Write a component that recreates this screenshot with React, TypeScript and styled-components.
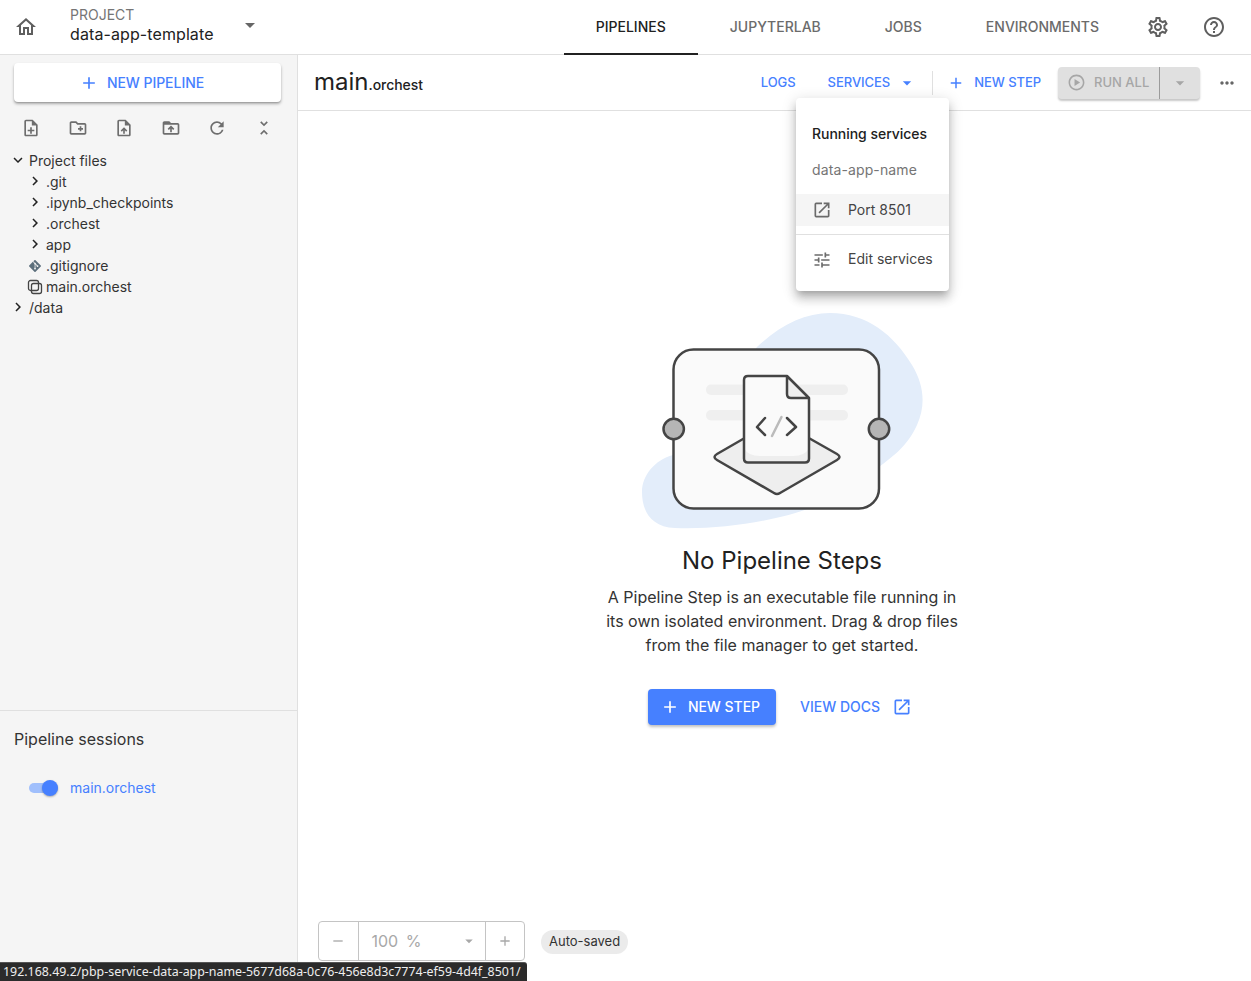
import React from "react";
import styled, { createGlobalStyle } from "styled-components";
import {
  MdAdd,
  MdArrowDropDown,
  MdChevronRight,
  MdDriveFolderUpload,
  MdExpandMore,
  MdHelpOutline,
  MdMoreHoriz,
  MdOpenInNew,
  MdOutlineCreateNewFolder,
  MdOutlineHome,
  MdOutlineNoteAdd,
  MdOutlinePlayCircle,
  MdOutlineSettings,
  MdOutlineTune,
  MdOutlineUploadFile,
  MdRefresh,
  MdRemove,
  MdUnfoldLess,
} from "react-icons/md";
import { SiGit } from "react-icons/si";

const BLUE = "#4680ff";

const GlobalStyle = createGlobalStyle`
  html, body {
    margin: 0;
    height: 100%;
    overflow: hidden;
    background: #fff;
  }
  body {
    font-family: Inter, "Liberation Sans", sans-serif;
    color: #212121;
  }
`;

// #region Header

const Page = styled.div`
  position: relative;
  display: flex;
  flex-direction: column;
  height: 981px;
  overflow: hidden;
`;

const Header = styled.header`
  display: flex;
  align-items: stretch;
  flex: 0 0 55px;
  box-sizing: border-box;
  border-bottom: 1px solid #e0e0e0;
  padding-right: 9px;
`;

const HomeButton = styled.div`
  display: flex;
  align-items: center;
  justify-content: center;
  width: 52px;
  font-size: 24px;
  color: #5f5f5f;
`;

const ProjectSelect = styled.div`
  display: flex;
  align-items: center;
  justify-content: space-between;
  width: 194px;
  margin-left: 18px;
  padding: 0 2px 4px 0;
  box-sizing: border-box;
`;

const ProjectLabel = styled.div`
  font-size: 14px;
  line-height: 18px;
  color: #757575;
`;

const ProjectName = styled.div`
  font-size: 16px;
  line-height: 20px;
  letter-spacing: 0.1px;
  color: #212121;
`;

const CaretIcon = styled(MdArrowDropDown)`
  font-size: 24px;
  color: #666;
`;

const Tabs = styled.nav`
  display: flex;
  margin-left: auto;
  margin-right: -1px;
  align-items: stretch;
`;

const Tab = styled.div<{ $active?: boolean }>`
  display: flex;
  align-items: center;
  padding: 0 32px 2px;
  font-size: 14px;
  font-weight: 500;
  color: ${(p) => (p.$active ? "#212121" : "#6b6b6b")};
  box-shadow: ${(p) => (p.$active ? "inset 0 -2px 0 #212121" : "none")};
  margin-bottom: -1px;
`;

const HeaderIcon = styled.div`
  display: flex;
  align-items: center;
  justify-content: center;
  width: 56px;
  font-size: 24px;
  color: #5f5f5f;
`;

// #endregion

// #region Sidebar

const Body = styled.div`
  display: flex;
  flex: 1;
  min-height: 0;
`;

const Sidebar = styled.aside`
  display: flex;
  flex-direction: column;
  flex: 0 0 298px;
  box-sizing: border-box;
  background: #f5f5f5;
  border-right: 1px solid #e0e0e0;
`;

const NewPipeline = styled.div`
  display: flex;
  align-items: center;
  justify-content: center;
  gap: 8px;
  height: 39px;
  margin: 8px 16px 0 14px;
  padding-right: 12px;
  background: #fff;
  border-radius: 4px;
  color: ${BLUE};
  font-size: 14px;
  font-weight: 500;
  letter-spacing: -0.05px;
  box-shadow: 0 2px 3px rgba(0, 0, 0, 0.3), 0 1px 1px rgba(0, 0, 0, 0.1);
  svg {
    font-size: 20px;
  }
`;

const FileTools = styled.div`
  display: flex;
  justify-content: space-between;
  padding: 0 23px 0 21px;
  margin-top: 16px;
  font-size: 20px;
  color: #6e6e6e;
  line-height: 0;
`;

const FileTree = styled.div`
  margin-top: 12px;
  font-size: 14px;
  color: #333;
`;

const TreeRow = styled.div<{ $depth?: number }>`
  display: flex;
  align-items: center;
  height: 21px;
  padding-left: ${(p) => (p.$depth ? 27 : 10)}px;
  svg {
    flex: 0 0 16px;
    font-size: 16px;
    color: #333;
  }
`;

const TreeToggle = styled.span`
  display: flex;
  justify-content: center;
  width: 16px;
  font-size: 18px;
  color: #222;
  margin-top: -2px;
  svg {
    flex: 0 0 18px;
    font-size: 18px;
    color: #222;
  }
`;

const TreeLabel = styled.span`
  margin-left: 3px;
`;

const GitIcon = styled(SiGit)`
  && {
    font-size: 12px;
    color: #5c6f7c;
  }
`;

const Sessions = styled.div`
  margin-top: auto;
  height: 271px;
  box-sizing: border-box;
  border-top: 1px solid #e0e0e0;
  padding: 18px 14px;
`;

const SessionsTitle = styled.div`
  font-size: 16px;
  line-height: 20px;
  color: #333;
`;

const SessionRow = styled.div`
  display: flex;
  align-items: center;
  margin: 30px 0 0 15px;
  font-size: 14px;
  color: ${BLUE};
`;

const Toggle = styled.div`
  position: relative;
  width: 29px;
  height: 10px;
  margin-right: 12px;
  border-radius: 5px;
  background: #a0bffc;
  &::after {
    content: "";
    position: absolute;
    right: 0;
    top: -3px;
    width: 16px;
    height: 16px;
    border-radius: 50%;
    background: ${BLUE};
    box-shadow: 0 1px 2px rgba(0, 0, 0, 0.3);
  }
`;

// #endregion

// #region Main area

const Main = styled.main`
  display: flex;
  flex-direction: column;
  flex: 1;
  min-width: 0;
`;

const Toolbar = styled.div`
  display: flex;
  align-items: center;
  flex: 0 0 56px;
  box-sizing: border-box;
  border-bottom: 1px solid #e0e0e0;
  padding: 0 14px 0 16px;
`;

const PipelineName = styled.div`
  font-size: 24px;
  color: #212121;
  margin: -2px auto 0 0;
  small {
    font-size: 14px;
    font-weight: 500;
    letter-spacing: -0.05px;
  }
`;

const TextButton = styled.div`
  display: flex;
  align-items: center;
  padding-bottom: 2px;
  font-size: 13px;
  font-weight: 500;
  letter-spacing: -0.05px;
  color: ${BLUE};
  svg {
    margin-top: 2px;
  }
`;

const LogsButton = styled(TextButton)`
  margin-right: 32px;
`;

const ServicesCaret = styled(MdArrowDropDown)`
  font-size: 20px;
  margin-left: 7px;
`;

const ToolbarDivider = styled.div`
  width: 1px;
  height: 24px;
  background: #e0e0e0;
  margin: 0 14px 0 15px;
`;

const NewStepButton = styled(TextButton)`
  gap: 9px;
  margin-right: 17px;
  svg {
    font-size: 18px;
  }
`;

const RunAll = styled.div`
  display: flex;
  align-items: stretch;
  width: 142px;
  height: 32px;
  border-radius: 4px;
  background: #e0e0e0;
  color: #a6a6a6;
  font-size: 13px;
  font-weight: 500;
  box-shadow: 0 2px 2px rgba(0, 0, 0, 0.22);
`;

const RunAllMain = styled.div`
  display: flex;
  align-items: center;
  gap: 8px;
  width: 102px;
  box-sizing: border-box;
  padding: 0 0 2px 9px;
  border-right: 1px solid #9b9b9b;
  svg {
    font-size: 19px;
    margin-top: 2px;
  }
`;

const RunAllCaret = styled.div`
  display: flex;
  flex: 1;
  align-items: center;
  justify-content: center;
  font-size: 20px;
`;

const MoreButton = styled.div`
  display: flex;
  margin-left: 17px;
  font-size: 20px;
  color: #666;
`;

const Canvas = styled.div`
  display: flex;
  flex: 1;
  flex-direction: column;
  align-items: center;
  padding: 194px 0 0 15px;
`;

const Illustration = styled.svg`
  display: block;
  width: 304px;
  height: 230px;
`;

const EmptyTitle = styled.h2`
  margin: 10px 0 0;
  font-size: 24px;
  line-height: 32px;
  font-weight: 400;
  color: #212121;
`;

const EmptyText = styled.p`
  margin: 8px 0 0;
  width: 360px;
  font-size: 16px;
  line-height: 24px;
  text-align: center;
  color: #333;
`;

const EmptyActions = styled.div`
  display: flex;
  align-items: center;
  margin: 32px 4px 0 0;
  gap: 24px;
`;

const PrimaryButton = styled.div`
  display: flex;
  align-items: center;
  gap: 8px;
  height: 36px;
  box-sizing: border-box;
  padding: 0 16px 2px 12px;
  border-radius: 4px;
  background: ${BLUE};
  color: #fff;
  font-size: 14px;
  font-weight: 500;
  letter-spacing: -0.05px;
  box-shadow: 0 2px 3px rgba(0, 0, 0, 0.25);
  svg {
    font-size: 20px;
    margin-top: 2px;
  }
`;

const DocsLink = styled.div`
  display: flex;
  align-items: center;
  gap: 12px;
  padding-bottom: 2px;
  color: ${BLUE};
  font-size: 14px;
  font-weight: 500;
  svg {
    font-size: 20px;
    margin-top: 2px;
  }
`;

// #endregion

// #region Overlays

const ServicesMenu = styled.div`
  position: absolute;
  left: 796px;
  top: 98px;
  width: 153px;
  height: 193px;
  box-sizing: border-box;
  padding-top: 24px;
  background: #fff;
  border-radius: 4px;
  box-shadow: 0 5px 6px -3px rgba(0, 0, 0, 0.2), 0 8px 10px 1px rgba(0, 0, 0, 0.14),
    0 3px 14px 2px rgba(0, 0, 0, 0.12);
  font-size: 14px;
  z-index: 5;
`;

const MenuHeading = styled.div`
  padding-left: 16px;
  line-height: 24px;
  font-weight: 500;
  letter-spacing: -0.03px;
  color: #212121;
`;

const MenuCaption = styled.div`
  padding-left: 16px;
  margin-top: 12px;
  line-height: 24px;
  letter-spacing: 0.12px;
  color: #757575;
`;

const MenuItem = styled.div<{ $selected?: boolean }>`
  display: flex;
  align-items: center;
  height: 32px;
  box-sizing: border-box;
  padding: 0 0 2px 16px;
  background: ${(p) => (p.$selected ? "#f5f5f5" : "transparent")};
  color: #444;
  svg {
    font-size: 20px;
    color: #6b6b6b;
    margin: 2px 16px 0 0;
  }
`;

const PortItem = styled(MenuItem)`
  margin-top: 12px;
`;

const MenuDivider = styled.div`
  height: 1px;
  background: #e0e0e0;
  margin: 8px 0;
`;

const EditItem = styled(MenuItem)`
  height: 33px;
`;

const ZoomControl = styled.div`
  position: absolute;
  left: 318px;
  top: 921px;
  display: flex;
  width: 207px;
  height: 40px;
  box-sizing: border-box;
  border: 1px solid #c4c4c4;
  border-radius: 4px;
  color: #a8a8a8;
`;

const ZoomStep = styled.div`
  display: flex;
  flex: 1;
  align-items: center;
  justify-content: center;
  font-size: 16px;
`;

const ZoomValue = styled.div`
  display: flex;
  flex: 0 0 128px;
  align-items: center;
  box-sizing: border-box;
  padding-left: 13px;
  border-left: 1px solid #c4c4c4;
  border-right: 1px solid #c4c4c4;
  font-size: 16px;
  word-spacing: 3px;
  svg {
    margin-left: auto;
    margin-right: 7px;
    font-size: 18px;
  }
`;

const SavedChip = styled.div`
  position: absolute;
  left: 541px;
  top: 930px;
  height: 24px;
  padding: 0 8px;
  border-radius: 12px;
  background: #ebebeb;
  color: #333;
  font-size: 13px;
  line-height: 23px;
`;

const StatusBar = styled.div`
  position: absolute;
  left: 0;
  bottom: 0;
  height: 19px;
  padding: 0 6px 0 3px;
  background: #2b2b2b;
  border-top: 1px solid #555;
  border-top-right-radius: 3px;
  box-sizing: border-box;
  color: #eee;
  font-family: "Noto Sans", sans-serif;
  font-size: 12.4px;
  line-height: 18px;
  white-space: nowrap;
  z-index: 6;
`;

// #endregion

const OrchestIcon = () => (
  <svg width="16" height="16" viewBox="0 0 16 16" fill="none" stroke="#444" strokeWidth="1.3">
    <rect x="1.5" y="1.5" width="10" height="10" rx="2" />
    <rect x="4.5" y="4.5" width="10" height="10" rx="2" />
  </svg>
);

const EmptyIllustration = () => (
  <Illustration viewBox="0 0 304 230">
    <path
      d="M127 42C150 20 175 8 200 8C237 8 264 30 282 60C294 80 296 100 287 120C277 142 262 152 245 165L180 203C150 215 90 225 45 223C20 222 12 205 12 187C12 170 25 155 43 150Z"
      fill="#e3edfa"
    />
    <rect x="43.5" y="44.5" width="205.5" height="159" rx="20" fill="#fafafa" stroke="#444" strokeWidth="2.5" />
    <rect x="76" y="79.5" width="142" height="10.5" rx="5" fill="#efefef" />
    <rect x="76" y="105" width="142" height="10.5" rx="5" fill="#efefef" />
    <path
      d="M113 134L87 149Q82 152 87 155L144 188Q147 190 150 188L207 155Q212 152 207 149L147 115Z"
      fill="#eee"
      stroke="#444"
      strokeWidth="2.5"
      strokeLinejoin="round"
    />
    <path d="M118 71H157L179 93V153.5Q179 157.5 175 157.5H118Q114 157.5 114 153.5V75Q114 71 118 71Z" fill="#fafafa" />
    <path d="M114 143Q118 151 130 151H163Q175 151 179 143V153.5Q179 157.5 175 157.5H118Q114 157.5 114 153.5Z" fill="#eee" />
    <path d="M157 71L179 93H161Q157 93 157 89Z" fill="#eee" />
    <path
      d="M157 71H118Q114 71 114 75V153.5Q114 157.5 118 157.5H175Q179 157.5 179 153.5V93L157 71V89Q157 93 161 93H179"
      fill="none"
      stroke="#444"
      strokeWidth="2.5"
      strokeLinejoin="round"
    />
    <path d="M135 113L127 122L135 130M157 113L166 122L157 130" fill="none" stroke="#444" strokeWidth="2.5" strokeLinecap="round" strokeLinejoin="round" />
    <path d="M151.5 112L142 131" stroke="#bbb" strokeWidth="2.5" strokeLinecap="round" />
    <circle cx="43.7" cy="124" r="10.2" fill="#b5b5b5" stroke="#444" strokeWidth="2.5" />
    <circle cx="249" cy="124" r="10.2" fill="#b5b5b5" stroke="#444" strokeWidth="2.5" />
  </Illustration>
);

const folders = [".git", ".ipynb_checkpoints", ".orchest", "app"];

const App = () => {
  return (
    <Page>
      <GlobalStyle />
      <Header>
        <HomeButton>
          <MdOutlineHome />
        </HomeButton>
        <ProjectSelect>
          <div>
            <ProjectLabel>PROJECT</ProjectLabel>
            <ProjectName>data-app-template</ProjectName>
          </div>
          <CaretIcon />
        </ProjectSelect>
        <Tabs>
          <Tab $active>PIPELINES</Tab>
          <Tab>JUPYTERLAB</Tab>
          <Tab>JOBS</Tab>
          <Tab>ENVIRONMENTS</Tab>
        </Tabs>
        <HeaderIcon>
          <MdOutlineSettings />
        </HeaderIcon>
        <HeaderIcon>
          <MdHelpOutline />
        </HeaderIcon>
      </Header>
      <Body>
        <Sidebar>
          <NewPipeline>
            <MdAdd />
            NEW PIPELINE
          </NewPipeline>
          <FileTools>
            <MdOutlineNoteAdd />
            <MdOutlineCreateNewFolder />
            <MdOutlineUploadFile />
            <MdDriveFolderUpload />
            <MdRefresh />
            <MdUnfoldLess />
          </FileTools>
          <FileTree>
            <TreeRow>
              <TreeToggle>
                <MdExpandMore />
              </TreeToggle>
              <TreeLabel>Project files</TreeLabel>
            </TreeRow>
            {folders.map((name) => (
              <TreeRow $depth={1} key={name}>
                <TreeToggle>
                  <MdChevronRight />
                </TreeToggle>
                <TreeLabel>{name}</TreeLabel>
              </TreeRow>
            ))}
            <TreeRow $depth={1}>
              <GitIcon />
              <TreeLabel>.gitignore</TreeLabel>
            </TreeRow>
            <TreeRow $depth={1}>
              <OrchestIcon />
              <TreeLabel>main.orchest</TreeLabel>
            </TreeRow>
            <TreeRow>
              <TreeToggle>
                <MdChevronRight />
              </TreeToggle>
              <TreeLabel>/data</TreeLabel>
            </TreeRow>
          </FileTree>
          <Sessions>
            <SessionsTitle>Pipeline sessions</SessionsTitle>
            <SessionRow>
              <Toggle />
              main.orchest
            </SessionRow>
          </Sessions>
        </Sidebar>
        <Main>
          <Toolbar>
            <PipelineName>
              main<small>.orchest</small>
            </PipelineName>
            <LogsButton>LOGS</LogsButton>
            <TextButton>
              SERVICES
              <ServicesCaret />
            </TextButton>
            <ToolbarDivider />
            <NewStepButton>
              <MdAdd />
              NEW STEP
            </NewStepButton>
            <RunAll>
              <RunAllMain>
                <MdOutlinePlayCircle />
                RUN ALL
              </RunAllMain>
              <RunAllCaret>
                <MdArrowDropDown />
              </RunAllCaret>
            </RunAll>
            <MoreButton>
              <MdMoreHoriz />
            </MoreButton>
          </Toolbar>
          <Canvas>
            <EmptyIllustration />
            <EmptyTitle>No Pipeline Steps</EmptyTitle>
            <EmptyText>
              A Pipeline Step is an executable file running in its own isolated environment. Drag &amp; drop files from
              the file manager to get started.
            </EmptyText>
            <EmptyActions>
              <PrimaryButton>
                <MdAdd />
                NEW STEP
              </PrimaryButton>
              <DocsLink>
                VIEW DOCS
                <MdOpenInNew />
              </DocsLink>
            </EmptyActions>
          </Canvas>
        </Main>
      </Body>
      <ServicesMenu>
        <MenuHeading>Running services</MenuHeading>
        <MenuCaption>data-app-name</MenuCaption>
        <PortItem $selected>
          <MdOpenInNew />
          Port 8501
        </PortItem>
        <MenuDivider />
        <EditItem>
          <MdOutlineTune />
          Edit services
        </EditItem>
      </ServicesMenu>
      <ZoomControl>
        <ZoomStep>
          <MdRemove />
        </ZoomStep>
        <ZoomValue>
          100 %
          <MdArrowDropDown />
        </ZoomValue>
        <ZoomStep>
          <MdAdd />
        </ZoomStep>
      </ZoomControl>
      <SavedChip>Auto-saved</SavedChip>
      <StatusBar>192.168.49.2/pbp-service-data-app-name-5677d68a-0c76-456e8d3c7774-ef59-4d4f_8501/</StatusBar>
    </Page>
  );
};

export default App;
